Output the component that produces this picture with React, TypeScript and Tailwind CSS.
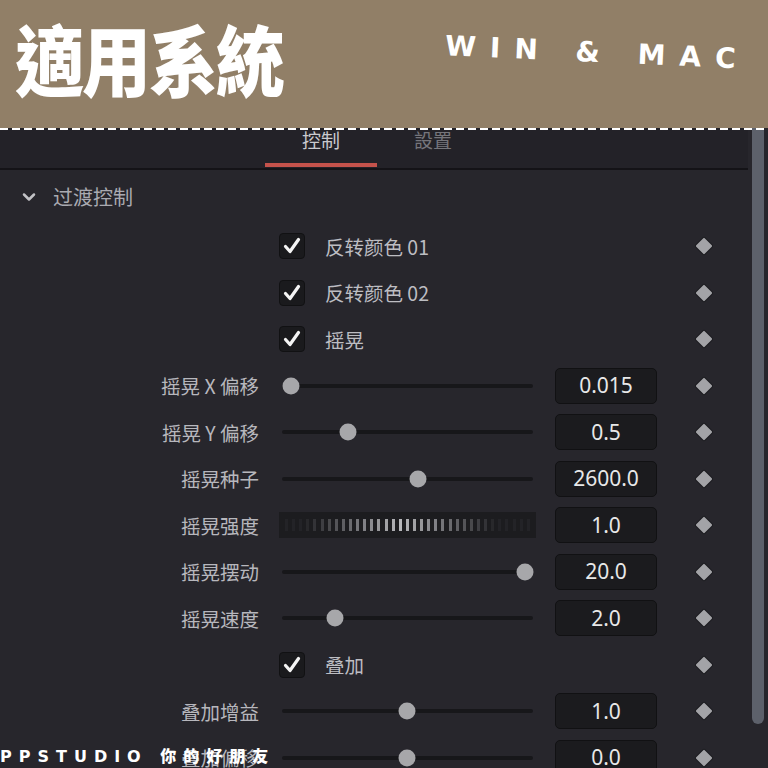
import React from "react";
import { ChevronDown } from "lucide-react";

type Row =
  | { kind: "check"; text: string }
  | { kind: "slider"; label: string; knob: number; value: string }
  | { kind: "ticks"; label: string; value: string };

const rows: Row[] = [
  { kind: "check", text: "反转颜色 01" },
  { kind: "check", text: "反转颜色 02" },
  { kind: "check", text: "摇晃" },
  { kind: "slider", label: "摇晃 X 偏移", knob: 12, value: "0.015" },
  { kind: "slider", label: "摇晃 Y 偏移", knob: 69, value: "0.5" },
  { kind: "slider", label: "摇晃种子", knob: 139, value: "2600.0" },
  { kind: "ticks", label: "摇晃强度", value: "1.0" },
  { kind: "slider", label: "摇晃摆动", knob: 246, value: "20.0" },
  { kind: "slider", label: "摇晃速度", knob: 56, value: "2.0" },
  { kind: "check", text: "叠加" },
  { kind: "slider", label: "叠加增益", knob: 128, value: "1.0" },
  { kind: "slider", label: "叠加偏移", knob: 128, value: "0.0" },
];

const cjk = "font-['Noto_Sans_CJK_SC','Noto_Sans',sans-serif]";

function Checkbox() {
  return (
    <div className="flex h-[26px] w-[26px] items-center justify-center rounded-[4px] border border-[#111113] bg-[#1a1a1d]">
      <svg width="20" height="20" viewBox="0 0 20 20">
        <path d="M3.5 10.5 L8 15.5 L16.5 3.5" fill="none" stroke="#f4f4f4" strokeWidth="3.2" strokeLinecap="round" strokeLinejoin="round" />
      </svg>
    </div>
  );
}

function Diamond() {
  return (
    <div className="flex w-[18px] items-center justify-center">
      <div className="h-[12px] w-[12px] rotate-45 rounded-[1px] bg-[#a3a3a7] shadow-[0_0_0_1px_#1c1c20]" />
    </div>
  );
}

function ValueBox({ value }: { value: string }) {
  return (
    <div className="flex h-[36px] w-[102px] items-center justify-center rounded-[5px] border border-[#111113] bg-[#1b1b1e] font-['Noto_Sans',sans-serif] text-[21px] text-[#e8e8e8]">
      {value}
    </div>
  );
}

function Slider({ knob }: { knob: number }) {
  return (
    <div className="relative flex h-full w-[257px] items-center px-[3px]">
      <div className="h-[4px] w-full rounded-full bg-[#17171a]" />
      <div
        className="absolute top-1/2 h-[17px] w-[17px] -translate-x-1/2 -translate-y-1/2 rounded-full bg-[#a7a7aa]"
        style={{ left: knob }}
      />
    </div>
  );
}

function Ticks() {
  const count = 35;
  return (
    <div className="flex h-[26px] w-[257px] items-center justify-between bg-[#1c1c1f] px-[6px]">
      {Array.from({ length: count }).map((_, i) => {
        const f = i / (count - 1);
        const o = Math.max(0.05, 1 - Math.abs(f - 0.47) * 2.4);
        return (
          <div
            key={i}
            className="h-[12px] w-[3px] bg-[#b8b8bc]"
            style={{ opacity: o }}
          />
        );
      })}
    </div>
  );
}

function ParamRow({ row }: { row: Row }) {
  return (
    <div className="flex h-[46.5px] items-center">
      <div className={`w-[260px] pr-[1px] text-right text-[19.5px] text-[#b7b7bd] ${cjk}`}>
        {row.kind === "check" ? "" : row.label}
      </div>
      <div className="ml-[19px] flex h-full w-[257px] items-center">
        {row.kind === "check" && (
          <div className="flex items-center">
            <Checkbox />
            <span className={`ml-[20px] text-[19.5px] text-[#bdbdc2] ${cjk}`}>{row.text}</span>
          </div>
        )}
        {row.kind === "slider" && <Slider knob={row.knob} />}
        {row.kind === "ticks" && <Ticks />}
      </div>
      <div className="ml-[19px] w-[102px]">
        {row.kind !== "check" && <ValueBox value={row.value} />}
      </div>
      <div className="ml-[38px]">
        <Diamond />
      </div>
    </div>
  );
}

export default function App() {
  return (
    <div className="relative h-[768px] w-[768px] overflow-hidden bg-[#27262c]">
      {/* banner */}
      <div className="relative z-10 flex h-[128px] items-start bg-[#917f67]">
        <div className="ml-[15px] mt-[13px] origin-top scale-y-[1.12] font-['Noto_Sans_CJK_TC',sans-serif] text-[69px] font-black leading-[80px] tracking-[-2px] text-white">
          適用系統
        </div>
        <div className="ml-auto mr-[18px] mt-[35px] rotate-[2.5deg] font-['DejaVu_Sans',sans-serif] text-[28px] font-bold leading-[36px] tracking-[14px] text-white">
          WIN &amp; MAC
        </div>
        <div className="absolute bottom-[-2px] left-0 h-[2px] w-full bg-[repeating-linear-gradient(90deg,#ffffff_0_8px,transparent_8px_12px)]" />
      </div>

      {/* inspector panel */}
      <div className="flex">
        <div className="w-[748px]">
          <div className="flex h-[42px] border-b-2 border-[#141317] bg-[#232228]">
            <div className="ml-[265px] flex w-[112px] flex-col items-center">
              <span className={`mt-[0px] text-[19px] leading-[24px] text-[#cacace] ${cjk}`}>控制</span>
              <div className="mt-auto mb-[1px] h-[4px] w-full bg-[#c4524b]" />
            </div>
            <div className="flex w-[112px] flex-col items-center">
              <span className={`mt-[0px] text-[19px] leading-[24px] text-[#75757b] ${cjk}`}>設置</span>
            </div>
          </div>

          <div className="flex h-[53px] items-center pl-[19px]">
            <ChevronDown className="h-[20px] w-[20px] text-[#c2c2c6]" strokeWidth={3} />
            <span className={`ml-[14px] text-[20px] text-[#a9aab1] ${cjk}`}>过渡控制</span>
          </div>

          {rows.map((r, i) => (
            <ParamRow key={i} row={r} />
          ))}
        </div>

        <div className="w-[20px] pl-[4px]">
          <div className="h-[596px] w-[12px] rounded-b-full bg-[#5d616b]" />
        </div>
      </div>

      {/* watermark */}
      <div className="absolute bottom-[1px] left-0 z-10 font-['DejaVu_Sans','Noto_Sans_CJK_TC',sans-serif] text-[16px] font-black leading-[20px] tracking-[7px] text-white">
        PPSTUDIO 你的好朋友
      </div>
    </div>
  );
}
